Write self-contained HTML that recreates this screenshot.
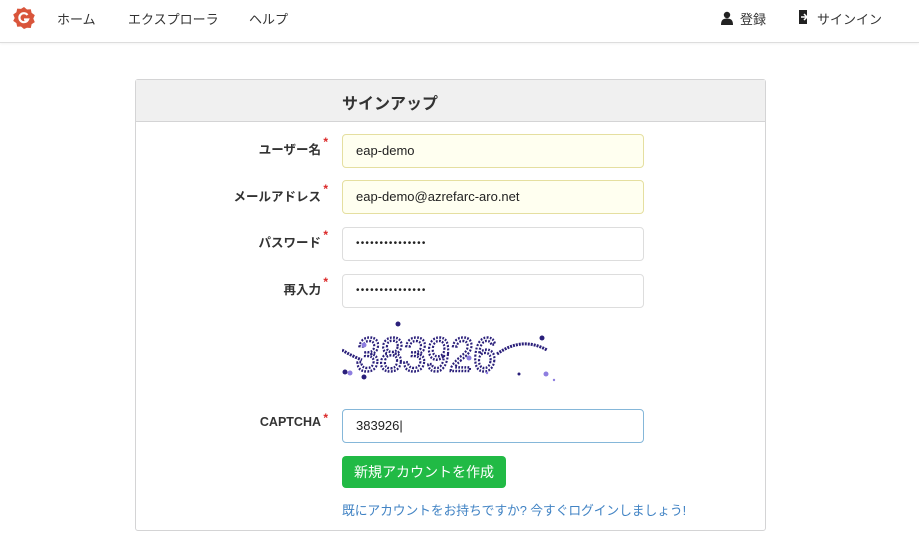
<!DOCTYPE html>
<html><head><meta charset="utf-8"><style>
*{box-sizing:border-box;margin:0;padding:0}
body{width:919px;height:554px;background:#fff;font-family:"Liberation Sans","Noto Sans CJK JP",sans-serif;font-size:13px;color:#333;overflow:hidden;position:relative}
.nav{position:absolute;left:0;top:0;width:919px;height:43px;border-bottom:1px solid #ddd;box-shadow:0 1px 2px rgba(0,0,0,.05)}
.nav span{position:absolute;top:9px;font-size:13px;color:#333}
.panel{position:absolute;left:135px;top:79px;width:631px;height:452px;border:1px solid #d4d4d5;border-radius:3px}
.hd{height:42px;background:#f0f0f0;border-bottom:1px solid #d4d4d5;font-size:16px;font-weight:bold;color:#333;padding:10px 0 0 206px}
.lbl{position:absolute;left:0;width:185px;text-align:right;font-size:12.5px;font-weight:bold;color:#333}
.lbl i{color:#db2828;font-style:normal;position:absolute;right:-7px;top:-4px;font-size:12px}
.in{position:absolute;left:206px;width:302px;height:34px;border:1px solid #ddd;border-radius:4px;padding:8px 13px;font-size:13px;color:#222}
.y{background:#fffff0;border-color:#e5dfa0}
.pw{font-size:10px;padding-top:10px;letter-spacing:1.2px}
</style></head><body>
<div class="nav">
<svg style="position:absolute;left:12px;top:6px" width="24" height="24" viewBox="0 0 24 24"><path d="M12 1l3 2.5 3.8-.3.8 3.7 3.2 2.2-1.5 3.5 1.5 3.5-3.2 2.2-.8 3.7-3.8-.3L12 23l-3-2.5-3.8.3-.8-3.7-3.2-2.2L2.7 12 1.2 8.5 4.4 6.3l.8-3.7 3.8.3z" fill="#d9553b"/><path d="M15.5 9a4.5 4.5 0 1 0 .5 4.5h-4" fill="none" stroke="#fff" stroke-width="2.2"/></svg>
<span style="left:57px">ホーム</span>
<span style="left:128px">エクスプローラ</span>
<span style="left:249px">ヘルプ</span>
<svg style="position:absolute;left:721px;top:11px" width="12" height="14" viewBox="0 0 12 14"><circle cx="6" cy="4" r="3.2" fill="#222"/><path d="M0 14c0-5 2-6.5 6-6.5s6 1.5 6 6.5z" fill="#222"/></svg>
<span style="left:740px">登録</span>
<svg style="position:absolute;left:798px;top:10px" width="12" height="14" viewBox="0 0 12 14"><path d="M1 0h8v14H1z" fill="#222"/><path d="M3 7h6M6 4l3 3-3 3" stroke="#fff" stroke-width="1.5" fill="none"/></svg>
<span style="left:817px">サインイン</span>
</div>
<div class="panel">
<div class="hd">サインアップ</div>
<div class="lbl" style="top:59px">ユーザー名<i>*</i></div>
<div class="in y" style="top:54px">eap-demo</div>
<div class="lbl" style="top:106px">メールアドレス<i>*</i></div>
<div class="in y" style="top:100px">eap-demo@azrefarc-aro.net</div>
<div class="lbl" style="top:152px">パスワード<i>*</i></div>
<div class="in pw" style="top:147px">•••••••••••••••</div>
<div class="lbl" style="top:199px">再入力<i>*</i></div>
<div class="in pw" style="top:194px">•••••••••••••••</div>
<svg style="position:absolute;left:206px;top:238px" width="220" height="70" viewBox="0 0 220 70">
<text x="18" y="55" textLength="140" lengthAdjust="spacingAndGlyphs" font-family="Liberation Sans" font-size="48" fill="none" stroke="#2a1f7a" stroke-width="2.5" stroke-dasharray="2 1.5" transform="translate(0,-2) skewX(-5)">383926</text>
<path d="M0 32q10 6 20 10M155 36q25-18 50-4" stroke="#2a1f7a" stroke-width="3" fill="none" stroke-dasharray="2 1"/>
<circle cx="56" cy="6" r="2.5" fill="#2a1f7a"/><circle cx="3" cy="54" r="2.5" fill="#2a1f7a"/><circle cx="22" cy="59" r="2.5" fill="#2a1f7a"/><circle cx="8" cy="55" r="2.5" fill="#8e7ee0"/><circle cx="204" cy="56" r="2.5" fill="#8e7ee0"/><circle cx="127" cy="40" r="2.5" fill="#8e7ee0"/><circle cx="177" cy="56" r="1.5" fill="#2a1f7a"/><circle cx="145" cy="55" r="1.2" fill="#8e7ee0"/><circle cx="200" cy="20" r="2.5" fill="#2a1f7a"/><circle cx="22" cy="27" r="2.5" fill="#8e7ee0"/><circle cx="212" cy="62" r="1.2" fill="#8e7ee0"/>
</svg>
<div class="lbl" style="top:335px">CAPTCHA<i>*</i></div>
<div class="in" style="top:329px;border-color:#85b7d9">383926|</div>
<div style="position:absolute;left:206px;top:376px;width:164px;height:32px;background:#21ba45;border-radius:4px;color:#fff;font-size:14px;text-align:center;line-height:32px">新規アカウントを作成</div>
<div style="position:absolute;left:206px;top:420px;font-size:12.8px;color:#4183c4;letter-spacing:-0.1px">既にアカウントをお持ちですか? 今すぐログインしましょう!</div>
</div>
</body></html>
